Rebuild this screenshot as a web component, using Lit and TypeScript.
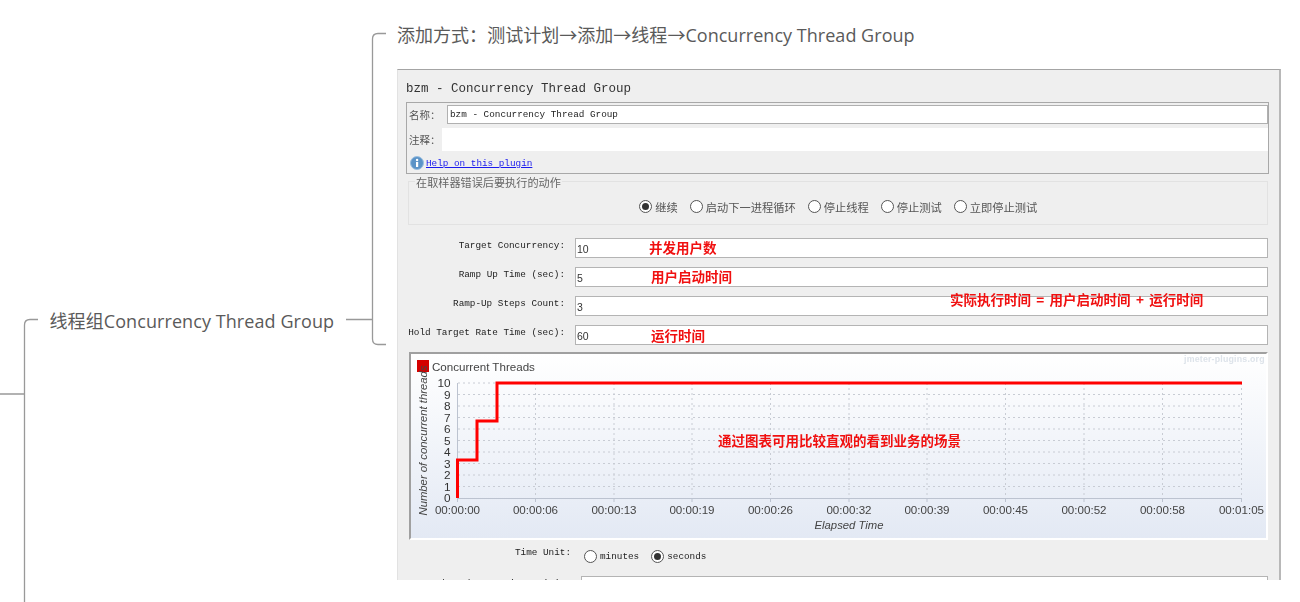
import { LitElement, html, css, svg } from "lit";
import { customElement } from "lit/decorators.js";

const ticks: [number, string][] = [
  [457.5, "00:00:00"], [535.5, "00:00:06"], [614, "00:00:13"], [692, "00:00:19"], [770.5, "00:00:26"],
  [849, "00:00:32"], [927, "00:00:39"], [1005.5, "00:00:45"], [1084, "00:00:52"], [1162.5, "00:00:58"], [1241.5, "00:01:05"],
];
const yVal = (v: number) => 498 - v * 11.5;
const yTicks = [0, 1, 2, 3, 4, 5, 6, 7, 8, 9, 10];

const rows = [
  { label: "Target Concurrency:", value: "10", note: "并发用户数", cls: "n1" },
  { label: "Ramp Up Time (sec):", value: "5", note: "用户启动时间", cls: "n2" },
  { label: "Ramp-Up Steps Count:", value: "3", note: "实际执行时间 = 用户启动时间 + 运行时间", cls: "n3" },
  { label: "Hold Target Rate Time (sec):", value: "60", note: "运行时间", cls: "n4" },
];
const actions = [
  { t: "继续", on: true }, { t: "启动下一进程循环", on: false }, { t: "停止线程", on: false },
  { t: "停止测试", on: false }, { t: "立即停止测试", on: false },
];

@customElement("app-root")
export class AppRoot extends LitElement {
  static styles = css`
    :host { display: block; width: 1300px; height: 602px; background: #fff; overflow: hidden; position: relative;
      font-family: "Liberation Sans", "Noto Sans CJK SC", sans-serif; }
    .links { position: absolute; left: 0; top: 0; width: 1300px; height: 602px; }
    .links path { fill: none; stroke: #999; stroke-width: 1.3; }
    .node { position: absolute; font-family: "Open Sans", "Noto Sans CJK SC", sans-serif; font-size: 18px; line-height: 24px;
      color: #5a5a5a; white-space: nowrap; font-weight: 400; letter-spacing: 0.08px; }
    .node.a { left: 397px; top: 22px; letter-spacing: 0.03px; }
    .node.b { left: 49.5px; top: 309px; }
    .arrow { font-family: "Noto Sans CJK SC", sans-serif; letter-spacing: 0; }

    .panel { position: absolute; left: 397px; top: 69px; width: 884px; height: 511px; box-sizing: border-box;
      background: #efefef; border-top: 1px solid #a4a4a4; border-left: 1px solid #e2e2e2; border-right: 2px solid #b8b8b8;
      overflow: hidden; filter: blur(0.35px); color: #333; }
    .mono { font-family: "Liberation Mono", "Noto Sans CJK SC", monospace; }
    .title { font-size: 12.5px; line-height: 16px; padding: 11px 0 0 8px; height: 21px; color: #333; }
    .box { margin-left: 8px; width: 863px; height: 72px; box-sizing: border-box; border: 1px solid #a8a8a8; display: flex; flex-direction: column; }
    .r-name { display: flex; align-items: center; height: 19px; margin-top: 2px; }
    .cap { font-size: 10.5px; color: #555; padding-left: 2px; font-family: "Noto Sans CJK SC", sans-serif; white-space: nowrap; box-sizing: border-box; flex: none; }
    .cap.w1 { width: 40px; }
    .cap.w2 { width: 35px; }
    .name { flex: 1; height: 19px; box-sizing: border-box; background: #fff; border: 1px solid #b0b0b0; font-size: 9.33px; line-height: 17px; padding-left: 2px; color: #222; }
    .r-note { display: flex; align-items: center; height: 23px; margin-top: 4px; }
    .note { flex: 1; height: 23px; background: #fff; }
    .r-help { display: flex; align-items: center; height: 22px; padding: 2px 0 0 3px; box-sizing: border-box; gap: 2px; }
    .help { font-size: 9.33px; color: #1a1aee; text-decoration: underline; }
    .group { position: relative; margin: 7px 0 0 10px; width: 860px; height: 44px; box-sizing: border-box; border: 1px solid #e2e2e2;
      display: flex; align-items: center; padding: 7px 0 0 230px; gap: 11.8px; }
    .legend { position: absolute; left: 6px; top: -6px; background: #efefef; padding: 0 1px; font-size: 11.15px; line-height: 13px; color: #666;
      font-family: "Noto Sans CJK SC", sans-serif; }
    .opt { display: flex; align-items: center; gap: 3.2px; font-size: 11.25px; color: #555; font-family: "Noto Sans CJK SC", sans-serif; white-space: nowrap; }
    .radio { width: 13px; height: 13px; box-sizing: border-box; border: 1px solid #555; border-radius: 50%; background: #fff; display: flex; align-items: center; justify-content: center; flex: none; }
    .radio.on::after { content: ""; width: 7px; height: 7px; border-radius: 50%; background: #333; }

    .form { display: flex; flex-direction: column; gap: 9px; margin-top: 13px; }
    .row { display: flex; height: 20px; align-items: stretch; }
    .lab { width: 167px; flex: none; text-align: right; font-size: 9.33px; line-height: 16px; color: #222; white-space: nowrap; margin-right: 10px; }
    .field { position: relative; width: 693px; box-sizing: border-box; background: #fff; border: 1px solid #b4b4b4; font-family: "Liberation Sans", sans-serif; font-size: 10.5px; line-height: 21px; padding-left: 1px; color: #333; }
    .red { position: absolute; font-family: "Noto Sans CJK SC", sans-serif; font-weight: 700; font-size: 13.5px; line-height: 18px; color: #f01010; white-space: nowrap; z-index: 2; }
    .n1 { left: 73px; top: -1px; }
    .n2 { left: 75px; top: -1px; }
    .n3 { left: 374px; top: -7px; word-spacing: 2.25px; }
    .n4 { left: 75px; top: 0; }
    .n5 { left: 307px; top: 77px; }

    .chart { position: relative; margin: 7px 0 0 11px; width: 859px; height: 188px; box-sizing: border-box; border-top: 2px solid #a0a0a0; border-left: 2px solid #a0a0a0;
      border-right: 2px solid #fff; border-bottom: 2px solid #fff; background: linear-gradient(#fff, #e3e9f4); }
    .chart svg { position: absolute; left: -2px; top: -2px; width: 859px; height: 188px; }
    .chart text { font-family: "Liberation Sans", sans-serif; fill: #444; }
    .tx { font-size: 11.6px; text-anchor: middle; }
    .chart .ty { font-size: 11.8px; text-anchor: end; fill: #333; }
    .chart .lg { font-size: 11.6px; }
    .chart .ax { font-size: 11.3px; font-style: italic; text-anchor: middle; }
    .chart .wm { font-size: 8.8px; font-weight: 700; fill: #dde3ea; letter-spacing: 0.2px; }
    .grid { stroke: #c8ccd4; stroke-width: 1; stroke-dasharray: 2 3; }
    .axis { stroke: #bcc3d0; stroke-width: 1; }
    .line { fill: none; stroke: #ff0000; stroke-width: 3; }

    .unit { display: flex; align-items: center; height: 20px; margin-top: 6px; font-size: 9.33px; color: #222; }
    .unit .ulab { width: 173px; text-align: right; flex: none; position: relative; top: -4px; }
    .unit .opts { display: flex; gap: 11px; margin-left: 13px; }
    .unit .opt { font-family: inherit; font-size: 9.33px; color: #222; gap: 3px; }
    .unit .opt + .opt { margin-left: 1px; }
    .limit { display: flex; margin-top: 10px; height: 20px; }
    .limit .lab { width: 173px; margin-right: 10px; }
    .limit .field { width: 687px; }
  `;

  render() {
    return html`
      <svg class="links" viewBox="0 0 1300 602">
        <path d="M0 394H24.5M38 319.5H30Q24.5 319.5 24.5 325V602"></path>
        <path d="M346 319.5H372.5M386 33.5H378Q372.5 33.5 372.5 39V339Q372.5 344.5 378 344.5H386"></path>
      </svg>
      <div class="node a">添加方式：测试计划<span class="arrow">→</span>添加<span class="arrow">→</span>线程<span class="arrow">→</span>Concurrency Thread Group</div>
      <div class="node b">线程组Concurrency Thread Group</div>

      <div class="panel mono">
        <div class="title">bzm - Concurrency Thread Group</div>
        <div class="box">
          <div class="r-name"><span class="cap w1">名称：</span><div class="name">bzm - Concurrency Thread Group</div></div>
          <div class="r-note"><span class="cap w2">注释：</span><div class="note"></div></div>
          <div class="r-help">
            <svg width="14" height="14" viewBox="0 0 14 14">
              <circle cx="7" cy="7" r="6.5" fill="#5b93c7" stroke="#9bbfe0"></circle>
              <rect x="6" y="6" width="2.2" height="5" fill="#fff"></rect>
              <circle cx="7.1" cy="4" r="1.2" fill="#fff"></circle>
            </svg>
            <span class="help">Help on this plugin</span>
          </div>
        </div>
        <div class="group">
          <span class="legend">在取样器错误后要执行的动作</span>
          ${actions.map((a) => html`<span class="opt"><span class="radio ${a.on ? "on" : ""}"></span>${a.t}</span>`)}
        </div>
        <div class="form">
          ${rows.map((r) => html`<div class="row">
            <div class="lab">${r.label}</div>
            <div class="field">${r.value}<span class="red ${r.cls}">${r.note}</span></div>
          </div>`)}
        </div>
        <div class="chart">
          <svg viewBox="409 352 859 188">
            ${yTicks.slice(1).map((v) => svg`<line class="grid" x1="458" x2="1242" y1=${yVal(v)} y2=${yVal(v)}></line>`)}
            ${ticks.slice(1).map(([x]) => svg`<line class="grid" x1=${x} x2=${x} y1="383" y2="498"></line>`)}
            <line class="axis" x1="457" x2="1242" y1="498.5" y2="498.5"></line>
            <line class="axis" x1="457.5" x2="457.5" y1="383" y2="498"></line>
            ${ticks.map(([x]) => svg`<line class="axis" x1=${x} x2=${x} y1="498" y2="502"></line>`)}
            ${yTicks.map((v) => svg`<text class="ty" x="450.5" y=${yVal(v) + 4.3}>${v}</text>`)}
            ${ticks.map(([x, t]) => svg`<text class="tx" x=${x} y="514">${t}</text>`)}
            <path class="line" d="M457.5 498V460H477V421H497V383H1242"></path>
            <rect x="417" y="360" width="12" height="12" fill="#d40000"></rect>
            <text class="lg" x="432" y="371">Concurrent Threads</text>
            <text class="ax" transform="translate(427 440.5) rotate(-90)">Number of concurrent threads</text>
            <text class="ax" x="849" y="529">Elapsed Time</text>
            <text class="wm" x="1184" y="362">jmeter-plugins.org</text>
          </svg>
          <span class="red n5">通过图表可用比较直观的看到业务的场景</span>
        </div>
        <div class="unit">
          <div class="ulab">Time Unit:</div>
          <div class="opts">
            <span class="opt"><span class="radio"></span>minutes</span>
            <span class="opt"><span class="radio on"></span>seconds</span>
          </div>
        </div>
        <div class="limit">
          <div class="lab">Thread Iterations Limit:</div>
          <div class="field"></div>
        </div>
      </div>
    `;
  }
}
